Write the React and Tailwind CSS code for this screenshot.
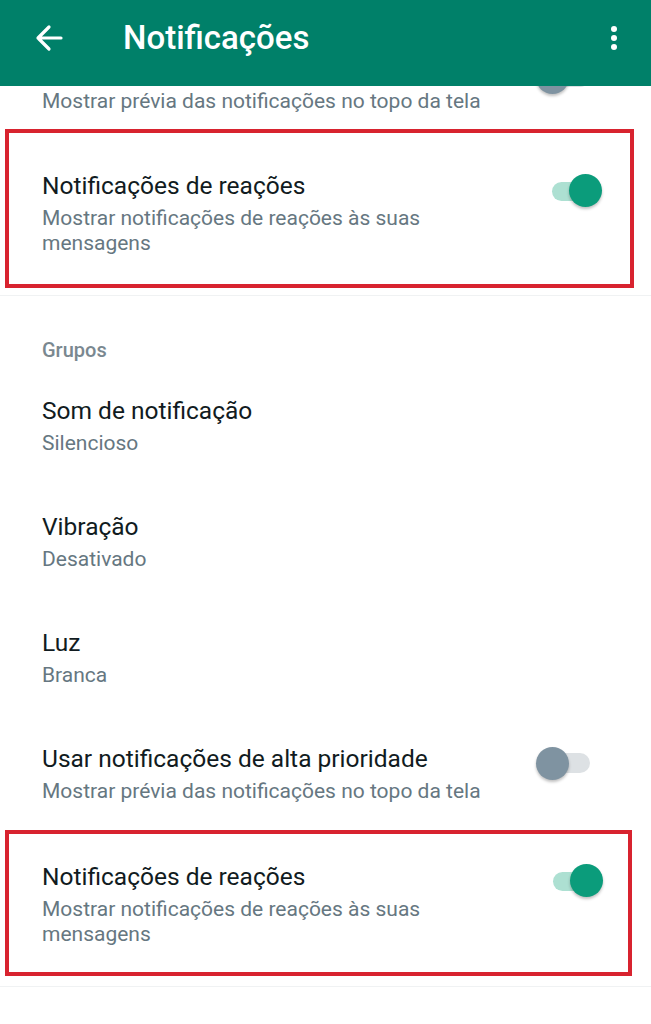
import React from "react";

function Toggle({ on, className = "" }) {
  if (on) {
    return (
      <div className={"relative w-[52px] h-[34px] " + className}>
        <div className="absolute left-[2px] top-[8px] w-[42px] h-[19px] rounded-full bg-[#ade0d2]" />
        <div className="absolute left-[19px] top-[0px] w-[33px] h-[33px] rounded-full bg-[#0b9c7b] shadow-[0_2px_3px_rgba(0,0,0,0.25)]" />
      </div>
    );
  }
  return (
    <div className={"relative w-[56px] h-[34px] " + className}>
      <div className="absolute left-[14px] top-[7px] w-[40px] h-[20px] rounded-full bg-[#dde1e4]" />
      <div className="absolute left-[0px] top-[1px] w-[33px] h-[33px] rounded-full bg-[#7f93a1] shadow-[0_2px_3px_rgba(0,0,0,0.25)]" />
    </div>
  );
}

function Item({ title, sub, className = "" }) {
  return (
    <div className={className}>
      <div className="text-[24.5px] leading-[30px] text-[#111b21]">{title}</div>
      <div className="mt-[5px] text-[21px] leading-[25px] text-[#667781]">{sub}</div>
    </div>
  );
}

export default function App() {
  const font = { fontFamily: "Roboto, 'Noto Sans', sans-serif" };
  return (
    <div className="w-[651px] h-[1024px] bg-white overflow-hidden" style={font}>
      <div className="h-[86px] bg-[#008069] flex items-center">
        <svg className="ml-[35px] mb-[10px]" width="28" height="28" viewBox="0 0 28 28" fill="none" stroke="white" strokeWidth="3.2" strokeLinecap="round" strokeLinejoin="round">
          <path d="M26 14H3M14 3L3 14l11 11" />
        </svg>
        <div className="ml-[60px] mb-[10px] text-[33px] leading-[38px] font-medium text-white">Notificações</div>
        <div className="ml-auto mr-[34px] mb-[10px] flex flex-col gap-[3px]">
          <div className="w-[6px] h-[6px] rounded-full bg-white" />
          <div className="w-[6px] h-[6px] rounded-full bg-white" />
          <div className="w-[6px] h-[6px] rounded-full bg-white" />
        </div>
      </div>

      <div className="h-[43px] relative overflow-hidden">
        <div className="absolute left-[536px] top-[-26px]">
          <Toggle on={false} />
        </div>
        <div className="pl-[42px] pt-[3px] text-[21px] leading-[25px] text-[#667781]">Mostrar prévia das notificações no topo da tela</div>
      </div>

      <div className="ml-[5px] w-[629px] border-[4px] border-[#d8232f] flex items-start">
        <Item className="pl-[33px] pt-[38px] pb-[28px] flex-1" title="Notificações de reações" sub={<>Mostrar notificações de reações às suas<br />mensagens</>} />
        <Toggle on className="mt-[41px] mr-[28px]" />
      </div>
      <div className="h-[8px] border-b border-[#f0f2f3]" />

      <div className="pl-[42px] pt-[42px] pb-[5px] text-[20px] leading-[24px] font-medium text-[#7a8890]">Grupos</div>

      <Item className="pl-[42px] pt-[29px] pb-[27px]" title="Som de notificação" sub="Silencioso" />
      <Item className="pl-[42px] pt-[29px] pb-[27px]" title="Vibração" sub="Desativado" />
      <Item className="pl-[42px] pt-[29px] pb-[27px]" title="Luz" sub="Branca" />

      <div className="flex items-start h-[115px]">
        <Item className="pl-[42px] pt-[29px] flex-1" title="Usar notificações de alta prioridade" sub="Mostrar prévia das notificações no topo da tela" />
        <Toggle on={false} className="mt-[31px] mr-[59px]" />
      </div>

      <div className="ml-[5px] w-[627px] border-[4px] border-[#d8232f] flex items-start">
        <Item className="pl-[33px] pt-[28px] pb-[25px] flex-1" title="Notificações de reações" sub={<>Mostrar notificações de reações às suas<br />mensagens</>} />
        <Toggle on className="mt-[30px] mr-[25px]" />
      </div>
      <div className="h-[11px] border-b border-[#f0f2f3]" />
    </div>
  );
}
